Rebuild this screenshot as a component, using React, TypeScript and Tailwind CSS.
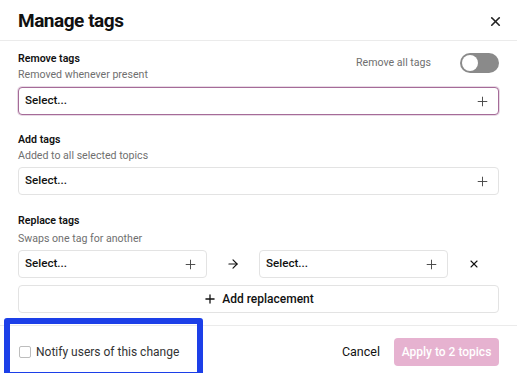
import { Plus, X, ArrowRight } from 'lucide-react'

function SelectBox({ active = false, className = '' }: { active?: boolean; className?: string }) {
  return (
    <div
      className={`flex h-[28px] items-center justify-between rounded-[4px] border bg-white pl-[6px] pr-[8px] ${
        active ? 'border-[#a56b98] shadow-[0_0_0_1px_rgba(165,107,152,0.25)]' : 'border-[#e3e3e3]'
      } ${className}`}
    >
      <span className="text-[11.6px] font-medium text-[#111]">Select...</span>
      <Plus className="h-[15px] w-[15px] text-[#444]" strokeWidth={1.5} />
    </div>
  )
}

function SectionLabel({ title, hint, gap = '' }: { title: string; hint: string; gap?: string }) {
  return (
    <div>
      <p className="text-[10.6px] font-semibold leading-[16px] text-[#111]">{title}</p>
      <p className={`text-[10.6px] leading-[16px] text-[#6f6f6f] ${gap}`}>{hint}</p>
    </div>
  )
}

export default function App() {
  return (
    <div className="relative h-[373px] w-[517px] overflow-hidden bg-white font-['Roboto',sans-serif]">
      {/* Header */}
      <header className="flex h-[41px] items-center justify-between border-b border-[#ebebeb] pl-[18px] pr-[14px] pt-[3px]">
        <h1 className="text-[19px] font-bold tracking-tight text-[#111]">Manage tags</h1>
        <X className="h-[15px] w-[15px] text-[#222]" strokeWidth={2.6} />
      </header>

      <main className="px-[18px] pt-[10px]">
        {/* Remove tags */}
        <section>
          <div className="flex items-start justify-between">
            <SectionLabel title="Remove tags" hint="Removed whenever present" />
            <div className="mt-[2px] flex items-center gap-[29px]">
              <span className="text-[10.6px] text-[#6f6f6f]">Remove all tags</span>
              <div className="flex h-[20px] w-[39px] items-center rounded-full bg-[#8a8a8a] px-[2px]">
                <div className="h-[16px] w-[16px] rounded-full bg-white" />
              </div>
            </div>
          </div>
          <SelectBox active className="mt-[4px]" />
        </section>

        {/* Add tags */}
        <section className="mt-[17px]">
          <SectionLabel title="Add tags" hint="Added to all selected topics" />
          <SelectBox className="mt-[3px]" />
        </section>

        {/* Replace tags */}
        <section className="mt-[18px]">
          <SectionLabel title="Replace tags" hint="Swaps one tag for another" gap="mt-[2px]" />
          <div className="mt-[3px] flex items-center">
            <SelectBox className="w-[189px]" />
            <div className="flex w-[52px] justify-center">
              <ArrowRight className="h-[14px] w-[14px] text-[#111]" strokeWidth={2} />
            </div>
            <SelectBox className="w-[189px]" />
            <div className="flex flex-1 justify-center">
              <X className="h-[12px] w-[12px] text-[#111]" strokeWidth={2.2} />
            </div>
          </div>
          <div className="mt-[7px] flex h-[28px] items-center justify-center gap-[5px] rounded-[4px] border border-[#e3e3e3] text-[12px] font-medium text-[#111]">
            <Plus className="h-[14px] w-[14px]" strokeWidth={2.2} />
            Add replacement
          </div>
        </section>
      </main>

      {/* Footer */}
      <footer className="mt-[12px] flex h-[47px] items-center justify-between border-t border-[#ebebeb] pl-[19px] pr-[18px] pt-[6px]">
        <label className="flex items-center gap-[5px] text-[12px] text-[#333]">
          <span className="h-[12px] w-[12px] rounded-[2px] border border-[#bdbdbd] bg-white" />
          Notify users of this change
        </label>
        <div className="flex items-center gap-[14px]">
          <span className="text-[12.5px] text-[#111]">Cancel</span>
          <div className="flex h-[28px] w-[105px] items-center justify-center rounded-[4px] bg-[#e6b2d0] text-[12px] font-medium text-white">
            Apply to 2 topics
          </div>
        </div>
      </footer>

      {/* Highlight annotation */}
      <div className="pointer-events-none absolute left-[4px] top-[318px] h-[60px] w-[199px] rounded-[3px] border-[6px] border-[#1c3fe8]" />
    </div>
  )
}
